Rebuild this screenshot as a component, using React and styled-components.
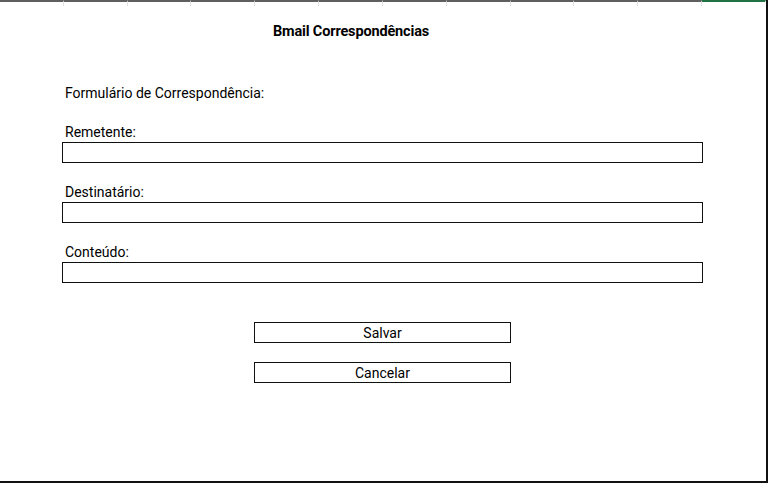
import React from "react";
import styled, { createGlobalStyle } from "styled-components";

const GlobalStyle = createGlobalStyle`
  html, body {
    margin: 0;
    padding: 0;
    background: #fff;
  }
  * {
    box-sizing: border-box;
  }
`;

const Sheet = styled.div`
  width: 768px;
  height: 483px;
  background: #fff;
  border-right: 2px solid #111;
  border-bottom: 2px solid #111;
  font-family: "Roboto", "Liberation Sans", sans-serif;
  color: #000;
  display: flex;
  flex-direction: column;
`;

const HeaderStrip = styled.div`
  display: grid;
  grid-template-columns: repeat(11, 1fr) 64px;
  height: 6px;
`;

const HeaderCell = styled.div`
  border-top: ${(p) => (p.$selected ? "2px solid #217346" : "2px solid #5f5f5f")};
  border-right: 1px solid ${(p) => (p.$selected ? "transparent" : "#e2e2e2")};
`;

const Title = styled.h1`
  width: 702px;
  margin: 17px 0 0;
  font-size: 14.5px;
  line-height: 18px;
  font-weight: 700;
  letter-spacing: -0.15px;
  text-align: center;
`;

const Form = styled.form`
  width: 641px;
  margin: 43px 0 0 62px;
  display: flex;
  flex-direction: column;
`;

const Label = styled.label`
  display: block;
  padding-left: 3px;
  font-size: 14px;
  line-height: 18px;
`;

const Field = styled.div`
  display: flex;
  flex-direction: column;
  gap: 1px;
  margin-top: ${(p) => p.$top || 20}px;
`;

const Input = styled.input`
  width: 100%;
  height: 21px;
  margin: 0;
  border: 1.5px solid #111;
  border-radius: 0;
  background: #fff;
  font: inherit;
  font-size: 13px;
  padding: 0 4px;
  outline: none;
`;

const Actions = styled.div`
  display: flex;
  flex-direction: column;
  align-items: center;
  gap: 19px;
  margin-top: 39px;
`;

const Button = styled.button`
  width: 257px;
  height: 21px;
  margin: 0;
  padding: 0;
  border: 1.5px solid #111;
  border-radius: 0;
  background: #fff;
  color: #000;
  font-family: "Roboto", "Liberation Sans", sans-serif;
  font-size: 14px;
  line-height: 18px;
  cursor: pointer;
`;

export default function App() {
  const columns = Array.from({ length: 12 }, (_, i) => i);

  return (
    <>
      <GlobalStyle />
      <Sheet>
        <HeaderStrip>
          {columns.map((c) => (
            <HeaderCell key={c} $selected={c === 11} />
          ))}
        </HeaderStrip>

        <Title>Bmail Correspondências</Title>

        <Form onSubmit={(e) => e.preventDefault()}>
          <Label as="div">Formulário de Correspondência:</Label>

          <Field $top={21}>
            <Label htmlFor="remetente">Remetente:</Label>
            <Input id="remetente" type="text" />
          </Field>
          <Field>
            <Label htmlFor="destinatario">Destinatário:</Label>
            <Input id="destinatario" type="text" />
          </Field>
          <Field>
            <Label htmlFor="conteudo">Conteúdo:</Label>
            <Input id="conteudo" type="text" />
          </Field>

          <Actions>
            <Button type="submit">Salvar</Button>
            <Button type="button">Cancelar</Button>
          </Actions>
        </Form>
      </Sheet>
    </>
  );
}
